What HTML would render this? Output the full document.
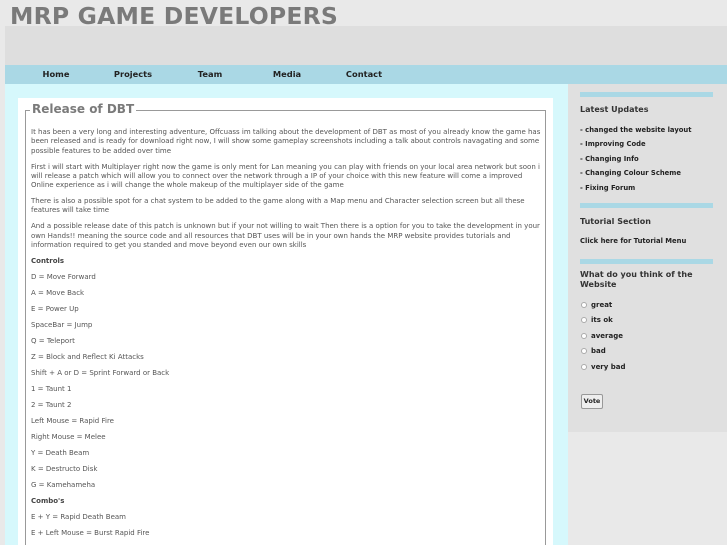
<!DOCTYPE html>
<html style="width:727px;height:545px;overflow:hidden"><head><meta charset="utf-8"><style>
*{margin:0;padding:0;box-sizing:border-box}
body{width:727px;height:545px;overflow:hidden;background:#e9e9e9;font-family:"DejaVu Sans","Liberation Sans",sans-serif;position:relative}
.title{position:absolute;left:10px;top:1px;font-size:23.5px;font-weight:bold;color:#7a7a7a;letter-spacing:0.2px;line-height:30px}
.hdr{position:absolute;left:5px;top:26px;width:722px;height:39px;background:#dedede}
.nav{position:absolute;left:5px;top:65px;width:722px;height:19px;background:#aad8e5}
.nav span{position:absolute;top:4px;font-size:8.3px;font-weight:bold;color:#222;transform:translateX(-50%)}
.left{position:absolute;left:5px;top:84px;width:563px;height:461px;background:#d6f8fc}
.white{position:absolute;left:18px;top:98px;width:535px;height:447px;background:#fff}
.fs{position:absolute;left:25px;top:110px;width:521px;height:435px;border:1px solid #999;border-bottom:none}
.legend{position:absolute;left:30px;top:102px;background:#fff;padding:0 2px;font-size:12px;font-weight:bold;color:#7a7a7a}
.content{position:absolute;left:31px;top:128px;width:510px;font-size:7px;line-height:9.3px;color:#555}
.content p{margin-bottom:6.7px}
.content b{color:#444}
.side{position:absolute;left:568px;top:84px;width:159px;height:348px;background:#e0e0e0}
.bar{position:absolute;left:12px;width:133px;height:5px;background:#aad8e5}
.side .h{position:absolute;left:12px;font-size:8px;font-weight:bold;color:#333;line-height:10px}
.side .l{position:absolute;left:12px;font-size:6.8px;font-weight:bold;color:#222}
.radio{position:absolute;left:13px;font-size:7px;font-weight:bold;color:#222}
.radio i{display:inline-block;width:6px;height:6px;border:1px solid #aaa;border-radius:50%;background:#fff;margin-right:4px;vertical-align:-1px}
.btn{position:absolute;left:13px;top:310px;width:22px;height:15px;border:1px solid #999;background:#eee;font-size:6.5px;font-weight:bold;text-align:center;line-height:13px;border-radius:2px;color:#222}
</style></head><body>
<div class="title">MRP GAME DEVELOPERS</div>
<div class="hdr"></div>
<div class="nav"><span style="left:51px">Home</span><span style="left:128px">Projects</span><span style="left:205px">Team</span><span style="left:282px">Media</span><span style="left:359px">Contact</span></div>
<div class="left"></div>
<div class="white"></div>
<div class="fs"></div>
<div class="legend">Release of DBT</div>
<div class="content">
<p>It has been a very long and interesting adventure, Offcuass im talking about the development of DBT as most of you already know the game has been released and is ready for download right now, I will show some gameplay screenshots including a talk about controls navagating and some possible features to be added over time</p>
<p>First i will start with Multiplayer right now the game is only ment for Lan meaning you can play with friends on your local area network but soon i will release a patch which will allow you to connect over the network through a IP of your choice with this new feature will come a improved Online experience as i will change the whole makeup of the multiplayer side of the game</p>
<p>There is also a possible spot for a chat system to be added to the game along with a Map menu and Character selection screen but all these features will take time</p>
<p>And a possible release date of this patch is unknown but if your not willing to wait Then there is a option for you to take the development in your own Hands!! meaning the source code and all resources that DBT uses will be in your own hands the MRP website provides tutorials and information required to get you standed and move beyond even our own skills</p>
<p><b>Controls</b></p>
<p>D = Move Forward</p><p>A = Move Back</p><p>E = Power Up</p><p>SpaceBar = Jump</p><p>Q = Teleport</p><p>Z = Block and Reflect Ki Attacks</p><p>Shift + A or D = Sprint Forward or Back</p><p>1 = Taunt 1</p><p>2 = Taunt 2</p><p>Left Mouse = Rapid Fire</p><p>Right Mouse = Melee</p><p>Y = Death Beam</p><p>K = Destructo Disk</p><p>G = Kamehameha</p>
<p><b>Combo's</b></p>
<p>E + Y = Rapid Death Beam</p><p>E + Left Mouse = Burst Rapid Fire</p>
</div>
<div class="side">
<div class="bar" style="top:8px"></div>
<div class="h" style="top:21px">Latest Updates</div>
<div class="l" style="top:42px">- changed the website layout</div>
<div class="l" style="top:56px">- Improving Code</div>
<div class="l" style="top:71px">- Changing Info</div>
<div class="l" style="top:85px">- Changing Colour Scheme</div>
<div class="l" style="top:100px">- Fixing Forum</div>
<div class="bar" style="top:119px"></div>
<div class="h" style="top:133px">Tutorial Section</div>
<div class="l" style="top:153px">Click here for Tutorial Menu</div>
<div class="bar" style="top:175px"></div>
<div class="h" style="top:186px">What do you think of the Website</div>
<div class="radio" style="top:217px"><i></i>great</div>
<div class="radio" style="top:232px"><i></i>its ok</div>
<div class="radio" style="top:248px"><i></i>average</div>
<div class="radio" style="top:263px"><i></i>bad</div>
<div class="radio" style="top:279px"><i></i>very bad</div>
<div class="btn">Vote</div>
</div>
</body></html>
